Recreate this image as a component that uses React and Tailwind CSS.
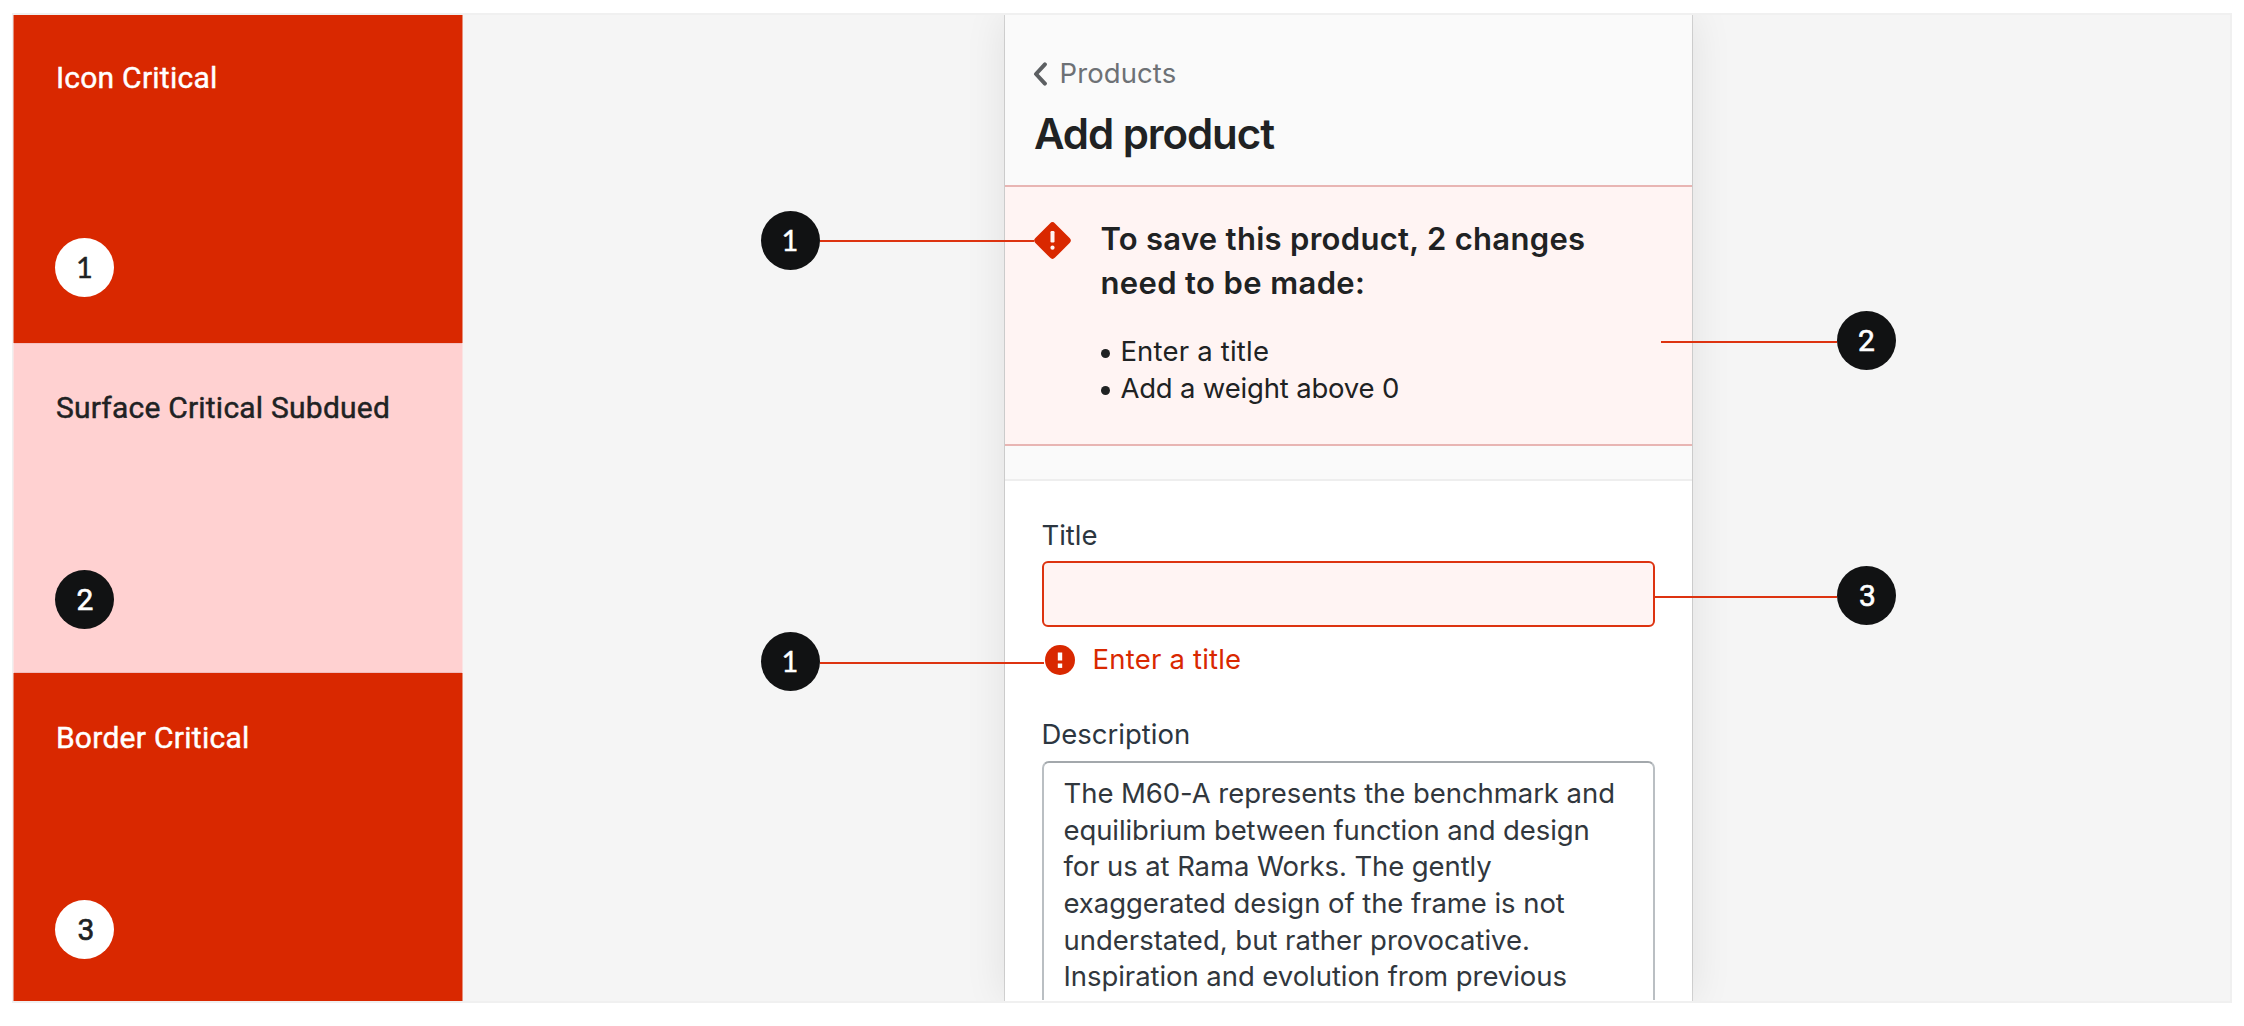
const swatches = [
  { name: 'Icon Critical', number: 1, box: 'h-[328px] bg-[#d92800] border-[#d92800]/50 text-white pt-[45px] pb-[46px]', dot: 'bg-white text-[#202223]', ls: 'tracking-[0.25px]' },
  { name: 'Surface Critical Subdued', number: 2, box: 'h-[330px] bg-[#ffd1d1] border-[#ffd1d1]/50 text-[#202223] pt-[47px] pb-[44px] shadow-[inset_0_1px_0_rgba(120,0,0,.08),inset_0_-1px_0_rgba(120,0,0,.1)]', dot: 'bg-[#111213] text-white', ls: 'tracking-[0.22px]' },
  { name: 'Border Critical', number: 3, box: 'h-[328px] bg-[#d92800] border-[#d92800]/50 text-white pt-[47px] pb-[42px]', dot: 'bg-white text-[#202223]', ls: 'tracking-[0.28px]' },
];

const markers = [
  { number: 1, row: 'left-[748px] top-[196px] w-[273px]', line: 'mt-px', flip: false },
  { number: 1, row: 'left-[748px] top-[617px] w-[283px]', line: 'mt-[3px]', flip: false },
  { number: 2, row: 'left-[1648px] top-[296px] w-[235px]', line: 'mt-[3px]', flip: true },
  { number: 3, row: 'left-[1642px] top-[551px] w-[241px]', line: 'mt-[3px]', flip: true },
];

const lines = [
  ['The M60-A represents the benchmark and', 'tracking-[-0.06px]'],
  ['equilibrium between function and design', 'tracking-[-0.09px]'],
  ['for us at Rama Works. The gently', 'tracking-[-0.1px]'],
  ['exaggerated design of the frame is not', 'tracking-[-0.06px]'],
  ['understated, but rather provocative.', 'tracking-[-0.02px]'],
  ['Inspiration and evolution from previous', 'tracking-[-0.06px]'],
];

const digitStyle = {
  1: 'font-[Lato,sans-serif] text-[29px] -mt-[2px] -ml-px [-webkit-text-stroke:0.4px_currentColor]',
  2: 'font-[Roboto,sans-serif] text-[30px] [-webkit-text-stroke:0.6px_currentColor]',
  3: 'font-[Roboto,sans-serif] text-[30px] ml-[2px] [-webkit-text-stroke:0.6px_currentColor]',
};

function Dot({ number, className }) {
  return (
    <div className={`flex size-[59px] shrink-0 items-center justify-center rounded-full ${className}`}>
      <span className={`leading-none ${digitStyle[number]}`}>{number}</span>
    </div>
  );
}

function Swatch({ name, number, box, dot, ls }) {
  return (
    <div className={`flex w-[450px] flex-col justify-between border-x bg-clip-padding pl-[41.4px] ${box}`}>
      <div className={`ml-[0.5px] font-[Roboto,sans-serif] text-[30px] leading-[36px] [-webkit-text-stroke:0.45px_currentColor] ${ls}`}>{name}</div>
      <Dot number={number} className={dot} />
    </div>
  );
}

function Marker({ number, row, line, flip }) {
  return (
    <div className={`absolute flex items-center ${row} ${flip ? 'flex-row-reverse' : ''}`}>
      <Dot number={number} className="bg-[#111213] text-white" />
      <div className={`h-[2px] flex-1 bg-[#dd3310] ${line}`} />
    </div>
  );
}

function Banner() {
  return (
    <div className="flex h-[261px] border-y-2 border-[#e8b5b3] bg-[#fff4f3] pt-[30px] pl-[29px] text-[#202223]">
      <svg width="37" height="37" viewBox="0 0 37 37" className="mt-[5px] shrink-0">
        <rect x="4.6" y="4.6" width="27.8" height="27.8" rx="3.6" transform="rotate(45 18.5 18.5)" fill="#d92800" />
        <rect x="16.5" y="9" width="4" height="11.5" rx="1.2" fill="#fff4f3" />
        <circle cx="18.5" cy="25.7" r="2.1" fill="#fff4f3" />
      </svg>
      <div className="ml-[29.4px] whitespace-nowrap">
        <div className="text-[31px] leading-[44px] font-semibold">
          <div className="tracking-[0.3px]">To save this product, 2 changes</div>
          <div className="tracking-[0.38px]">need to be made:</div>
        </div>
        <ul className="mt-[28px] text-[27.5px]">
          <li className="flex h-[37px] items-center leading-[37px]">
            <span className="mt-[4px] ml-[1px] size-[9px] rounded-full bg-[#202223]" />
            <span className="ml-[10px] tracking-[0.2px]">Enter a title</span>
          </li>
          <li className="flex h-[37px] items-center leading-[37px]">
            <span className="mt-[4px] ml-[1px] size-[9px] rounded-full bg-[#202223]" />
            <span className="ml-[10px] tracking-[-0.18px]">Add a weight above 0</span>
          </li>
        </ul>
      </div>
    </div>
  );
}

function ProductPanel() {
  return (
    <div className="ml-[542px] h-[986px] w-[687px] shrink-0 bg-white font-[Inter,sans-serif] shadow-[0_0_0_1px_rgba(0,0,0,.13),0_0_40px_rgba(0,0,0,.09)]">
      <div className="h-[170px] bg-[#fafafa] pt-[40px] pl-[29px]">
        <div className="flex h-[36px] items-center text-[27.5px] leading-[36px] text-[#6d7175]">
          <svg width="14" height="24" viewBox="0 0 14 24" className="-ml-px mt-[2px]">
            <path d="M11.9 2.4 L3 12 L11.9 21.6" fill="none" stroke="#5c5f62" strokeWidth="4" strokeLinecap="round" strokeLinejoin="round" />
          </svg>
          <span className="ml-[12.5px] tracking-[0.1px]">Products</span>
        </div>
        <h1 className="mt-[18px] text-[42px] leading-[50px] font-semibold tracking-[-1.07px] text-[#202223]">Add product</h1>
      </div>
      <Banner />
      <div className="h-[35px] border-b-2 border-[#eeeeee] bg-[#fafafa]" />
      <div className="px-[37px] pt-[36px] text-[27.5px] text-[#2c3640]">
        <div className="-ml-[0.6px] leading-[36px]">Title</div>
        <div className="mt-[8px] h-[66px] w-[613px] rounded-[6px] border-2 border-[#dd3310] bg-[#fff4f3]" />
        <div className="mt-[14px] flex h-[36px] items-center leading-[36px] text-[#d92800]">
          <svg width="30" height="30" viewBox="0 0 30 30" className="ml-[2.6px] mt-[2px]">
            <circle cx="15" cy="15" r="15" fill="#d92800" />
            <rect x="12.8" y="7.5" width="4.4" height="8" fill="#fff" />
            <rect x="12.8" y="18.5" width="4.4" height="4.4" fill="#fff" />
          </svg>
          <span className="ml-[18px] tracking-[0.2px]">Enter a title</span>
        </div>
        <div className="mt-[39px] -ml-[0.6px] leading-[36px]">Description</div>
        <div className="mt-[9px] h-[239px] w-[613px] overflow-hidden rounded-t-[7px] border-2 border-b-0 border-[#babfc3] border-t-[#a3a8ac] pt-[12px] pl-[19.5px] text-[#31373d]">
          {lines.map(([text, ls]) => (
            <div key={text} className={`leading-[36.67px] whitespace-nowrap ${ls}`}>{text}</div>
          ))}
        </div>
      </div>
    </div>
  );
}

export default function App() {
  return (
    <div className="h-[1026px] w-[2244px] overflow-hidden bg-white pt-[13px] pl-[12px]">
      <div className="relative flex h-[990px] w-[2220px] overflow-hidden border-2 border-l border-[#f0f0f0] bg-[#f5f5f5]">
        <div className="flex shrink-0 flex-col">
          {swatches.map((s) => <Swatch key={s.name} {...s} />)}
        </div>
        <ProductPanel />
        {markers.map((m, i) => <Marker key={i} {...m} />)}
      </div>
    </div>
  );
}
